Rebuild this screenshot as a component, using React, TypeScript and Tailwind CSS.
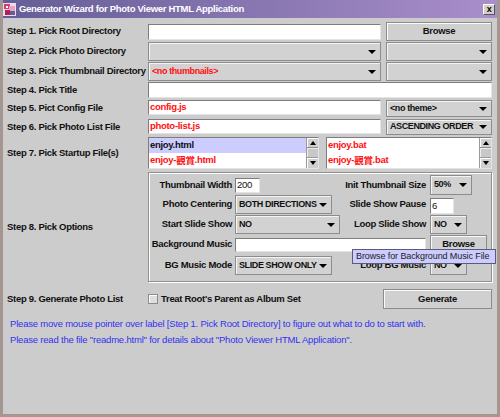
import React from "react";

const Arrow = () => (
  <span className="w-0 h-0 border-l-[4px] border-r-[4px] border-t-[4px] border-l-transparent border-r-transparent border-t-black shrink-0" />
);

const Combo = ({ text = "", className = "", red = false }: { text?: string; className?: string; red?: boolean }) => (
  <div
    className={`flex items-center justify-between bg-[#d2d2d2] border border-[#8c8c8c] shadow-[inset_1px_1px_0_#f4f4f4] pl-[3px] pr-[4px] ${className}`}
  >
    <span className={`font-bold whitespace-nowrap text-[9px] tracking-[-0.4px] ${red ? "text-[#ff1010]" : "text-[#111]"}`}>{text}</span>
    <Arrow />
  </div>
);

const Field = ({ text = "", className = "", red = false, bold = false }: { text?: string; className?: string; red?: boolean; bold?: boolean }) => (
  <div
    className={`flex items-center bg-white border border-t-[#7d7d7d] border-l-[#7d7d7d] border-r-[#e4e4e4] border-b-[#e4e4e4] px-[1px] ${className}`}
  >
    <span className={`whitespace-nowrap ${red ? "text-[#ff1010]" : "text-[#111]"} ${bold ? "font-bold" : ""}`}>{text}</span>
  </div>
);

const Btn = ({ text, className = "" }: { text: string; className?: string }) => (
  <div
    className={`flex items-center justify-center bg-[#d0d0d0] border border-[#8c8c8c] shadow-[inset_1px_1px_0_#fafafa] font-bold text-[#111] ${className}`}
  >
    {text}
  </div>
);

const Scroll = () => (
  <div className="w-[12px] h-full flex flex-col bg-[#d8d8d8] border-l border-[#9a9a9a]">
    <div className="h-[10px] flex items-center justify-center bg-[#cfcfcf] border-b border-[#8c8c8c] shadow-[inset_1px_1px_0_#fff]">
      <span className="w-0 h-0 border-l-[3px] border-r-[3px] border-b-[4px] border-l-transparent border-r-transparent border-b-black" />
    </div>
    <div className="flex-1 bg-[#c8c8c8] border-b border-[#9a9a9a] shadow-[inset_1px_1px_0_#eee]" />
    <div className="h-[10px] flex items-center justify-center bg-[#cfcfcf] shadow-[inset_1px_1px_0_#fff]">
      <span className="w-0 h-0 border-l-[3px] border-r-[3px] border-t-[4px] border-l-transparent border-r-transparent border-t-black" />
    </div>
  </div>
);

const Label = ({ children }: { children: React.ReactNode }) => (
  <div className="w-[141px] shrink-0 font-bold text-[#111] whitespace-nowrap">{children}</div>
);

const OptLabel = ({ children, w }: { children: React.ReactNode; w: string }) => (
  <div className={`${w} shrink-0 text-right font-bold text-[#111] whitespace-nowrap`}>{children}</div>
);

export default function App() {
  return (
    <div className="relative w-[500px] h-[417px] bg-[#cccccc] border-x-[3px] border-b-[3px] border-[#a49792] flex flex-col text-[9.5px] tracking-[-0.3px] font-['Liberation_Sans',Arial,sans-serif] overflow-hidden">
      {/* Title bar */}
      <div className="-mx-[3px] h-[18px] shrink-0 flex items-center bg-linear-to-r from-[#655d97] to-[#aa8fcb] pl-[3px] pr-[5px]">
        <svg width="13" height="13" viewBox="0 0 13 13" className="shrink-0">
          <rect x="0" y="0" width="13" height="13" fill="#e8dcf0" />
          <rect x="1" y="1" width="6" height="5" fill="#d83a6a" />
          <rect x="6" y="3" width="6" height="5" fill="#f0a0c0" />
          <rect x="2" y="7" width="5" height="5" fill="#b02050" />
          <rect x="7" y="8" width="5" height="4" fill="#6a5aa0" />
          <rect x="3" y="3" width="2" height="2" fill="#fff" />
        </svg>
        <span className="ml-[3px] text-white font-bold text-[9.5px] tracking-[-0.3px] whitespace-nowrap">
          Generator Wizard for Photo Viewer HTML Application
        </span>
        <div className="ml-auto w-[12px] h-[11px] flex items-center justify-center bg-[#d4d0c8] border border-t-white border-l-white border-r-[#555] border-b-[#555] text-[9px] font-bold leading-none text-black">
          x
        </div>
      </div>

      <div className="flex flex-col pl-[4px] pr-[5px]">
        {/* Step 1 */}
        <div className="mt-[4px] h-[19px] flex items-center">
          <Label>Step 1. Pick Root Directory</Label>
          <Field className="w-[233px] h-[16px]" />
          <Btn text="Browse" className="ml-[5px] flex-1 h-full" />
        </div>
        {/* Step 2 */}
        <div className="mt-[1px] h-[19px] flex items-center">
          <Label>Step 2. Pick Photo Directory</Label>
          <Combo className="w-[233px] h-full" />
          <Combo className="ml-[5px] flex-1 h-full" />
        </div>
        {/* Step 3 */}
        <div className="mt-[1px] h-[19px] flex items-center">
          <Label>Step 3. Pick Thumbnail Directory</Label>
          <Combo text="<no thumbnails>" red className="w-[233px] h-full" />
          <Combo className="ml-[5px] flex-1 h-full" />
        </div>
        {/* Step 4 */}
        <div className="mt-[1px] h-[16px] flex items-center">
          <Label>Step 4. Pick Title</Label>
          <Field className="flex-1 h-full" />
        </div>
        {/* Step 5 */}
        <div className="mt-[2px] h-[17px] flex items-center">
          <Label>Step 5. Pict Config File</Label>
          <Field text="config.js" red bold className="w-[233px] h-[15px] self-start" />
          <Combo text="<no theme>" className="ml-[5px] flex-1 h-full" />
        </div>
        {/* Step 6 */}
        <div className="mt-[2px] h-[16px] flex items-center">
          <Label>Step 6. Pick Photo List File</Label>
          <Field text="photo-list.js" red bold className="w-[233px] h-[15px] self-start" />
          <Combo text="ASCENDING ORDER" className="ml-[5px] flex-1 h-full" />
        </div>
        {/* Step 7 */}
        <div className="mt-[2px] h-[32px] flex items-center">
          <Label>Step 7. Pick Startup File(s)</Label>
          <div className="w-[171px] h-full flex bg-white border border-t-[#7d7d7d] border-l-[#7d7d7d] border-r-[#e4e4e4] border-b-[#e4e4e4]">
            <div className="flex-1 flex flex-col font-bold">
              <div className="h-[15px] flex items-center bg-[#ccccff] pl-[1px] text-[#111]">enjoy.html</div>
              <div className="h-[15px] flex items-center pl-[1px] text-[#ff1010]">
                enjoy-<span className="font-['Noto_Sans_CJK_TC',sans-serif]">觀賞</span>.html
              </div>
            </div>
            <Scroll />
          </div>
          <div className="ml-[7px] flex-1 h-full flex bg-white border border-t-[#7d7d7d] border-l-[#7d7d7d] border-r-[#e4e4e4] border-b-[#e4e4e4]">
            <div className="flex-1 flex flex-col font-bold text-[#ff1010]">
              <div className="h-[15px] flex items-center pl-[1px]">enjoy.bat</div>
              <div className="h-[15px] flex items-center pl-[1px]">
                enjoy-<span className="font-['Noto_Sans_CJK_TC',sans-serif]">觀賞</span>.bat
              </div>
            </div>
            <Scroll />
          </div>
        </div>
        {/* Step 8 */}
        <div className="mt-[3px] h-[110px] flex items-center">
          <Label>Step 8. Pick Options</Label>
          <div className="flex-1 h-full flex flex-col border border-[#8f8f8f] shadow-[inset_1px_1px_0_#fff,1px_1px_0_#fff] pt-[2px]">
            <div className="h-[20px] flex items-center">
              <OptLabel w="w-[83px]">Thumbnail Width</OptLabel>
              <div className="ml-[3px] w-[110px] shrink-0 flex">
                <Field text="200" className="w-[25px] h-[15px]" />
              </div>
              <OptLabel w="w-[81px]">Init Thumbnail Size</OptLabel>
              <Combo text="50%" className="ml-[4px] w-[42px] h-full" />
            </div>
            <div className="h-[19px] flex items-center">
              <OptLabel w="w-[83px]">Photo Centering</OptLabel>
              <div className="ml-[3px] w-[110px] h-full shrink-0 flex">
                <Combo text="BOTH DIRECTIONS" className="w-[97px] h-full" />
              </div>
              <OptLabel w="w-[81px]">Slide Show Pause</OptLabel>
              <Field text="6" className="ml-[4px] w-[24px] h-[16px] self-end" />
            </div>
            <div className="mt-[1px] h-[19px] flex items-center">
              <OptLabel w="w-[83px]">Start Slide Show</OptLabel>
              <div className="ml-[3px] w-[110px] h-full shrink-0 flex">
                <Combo text="NO" className="w-[105px] h-full" />
              </div>
              <OptLabel w="w-[81px]">Loop Slide Show</OptLabel>
              <Combo text="NO" className="ml-[4px] w-[37px] h-full" />
            </div>
            <div className="mt-[1px] h-[19px] flex items-center">
              <OptLabel w="w-[83px]">Background Music</OptLabel>
              <Field className="ml-[3px] w-[191px] h-[14px]" />
              <Btn text="Browse" className="ml-[4px] w-[57px] h-full" />
            </div>
            <div className="mt-[2px] h-[19px] flex items-center">
              <OptLabel w="w-[83px]">BG Music Mode</OptLabel>
              <div className="ml-[3px] w-[110px] h-full shrink-0 flex">
                <Combo text="SLIDE SHOW ONLY" className="w-[97px] h-full" />
              </div>
              <OptLabel w="w-[81px]">Loop BG Music</OptLabel>
              <Combo text="NO" className="ml-[4px] w-[37px] h-full" />
            </div>
          </div>
        </div>
        {/* Step 9 */}
        <div className="mt-[7px] h-[20px] flex items-center">
          <Label>Step 9. Generate Photo List</Label>
          <div className="w-[10px] h-[10px] bg-[#dedede] border border-[#8c8c8c] shadow-[inset_1px_1px_0_#fff]" />
          <span className="ml-[3px] font-bold text-[#111] whitespace-nowrap">Treat Root's Parent as Album Set</span>
          <Btn text="Generate" className="ml-auto w-[109px] h-full" />
        </div>
        {/* Help text */}
        <div className="mt-[7px] pl-[3px] flex flex-col text-[#3232f0] leading-[16px] tracking-[-0.2px]">
          <span className="whitespace-nowrap">
            Please move mouse pointer over label [Step 1. Pick Root Directory] to figure out what to do to start with.
          </span>
          <span className="whitespace-nowrap">
            Please read the file "readme.html" for details about "Photo Viewer HTML Application".
          </span>
        </div>
      </div>

      {/* Tooltip */}
      <div className="absolute left-[349px] top-[249px] w-[144px] h-[15px] flex items-center bg-[#ccccff] border border-[#5a5a7a] pl-[3px] text-[9px] tracking-[-0.1px] text-[#222] whitespace-nowrap">
        Browse for Background Music File
      </div>
    </div>
  );
}
